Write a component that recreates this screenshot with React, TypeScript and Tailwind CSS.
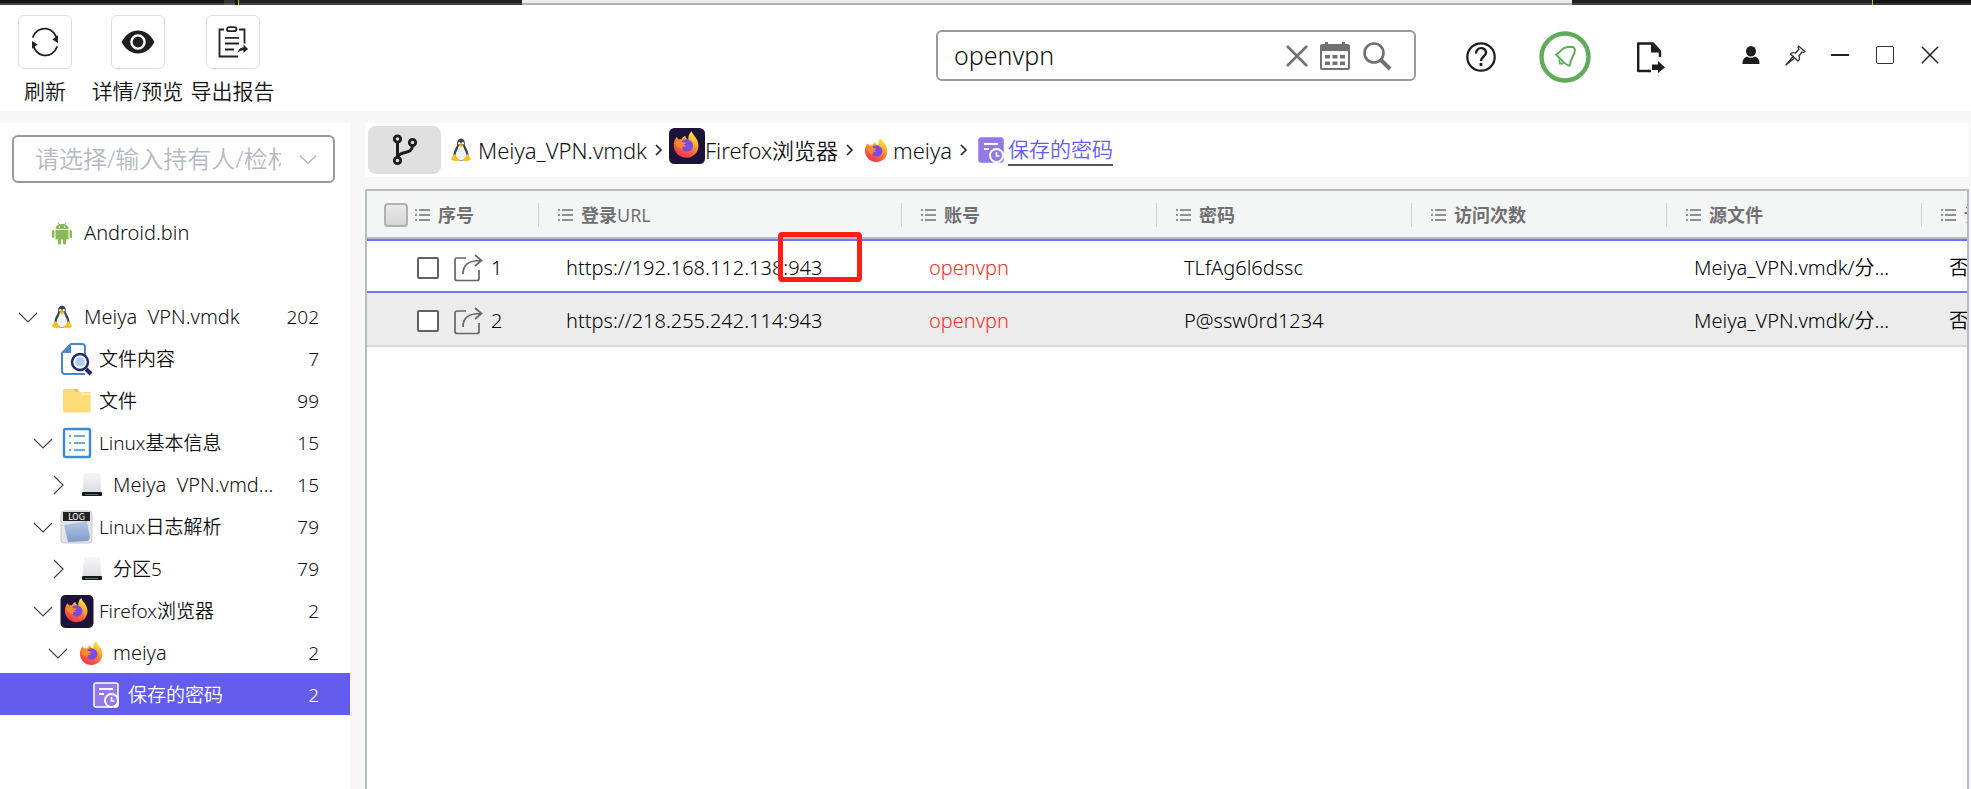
import type { ReactNode } from "react";

type IconProps = { className?: string };

const Refresh = () => (
  <svg width="28" height="30" viewBox="0 0 28 30" fill="none" stroke="#222" strokeWidth="1.8" strokeLinecap="round">
    <path d="M2 10A12.4 13 0 0 1 26 14" />
    <path d="M26 20A12.4 13 0 0 1 2 16" />
    <path d="M26.4 9.500v5.500l-4-2.500z" fill="#222" strokeWidth="1.200" />
    <path d="M1.600 20.500V15l4 2.500z" fill="#222" strokeWidth="1.200" />
  </svg>
);

const Eye = () => (
  <svg width="34" height="24" viewBox="0 0 34 24">
    <path d="M0.500 12C5 4 10.500 0.500 17 0.500S29 4 33.500 12C29 20 23.500 23.500 17 23.500S5 20 0.500 12z" fill="#1f1f1f" />
    <circle cx="17" cy="12" r="6.600" fill="#1f1f1f" stroke="#fff" strokeWidth="2.400" />
  </svg>
);

const Report = () => (
  <svg width="30" height="32" viewBox="0 0 30 32" fill="none" stroke="#222" strokeWidth="1.800">
    <path d="M6 3.500H1.500v27H20" />
    <path d="M21 3.500h5.500v14" />
    <rect x="9" y="1.200" width="9.500" height="4" rx="2" />
    <path d="M7 11.800h14M7 17.500h14M7 23.500h9" />
    <path d="M19.500 27c1-4 3-5.500 6-5.500V18.500l4.500 4.500-4.500 4v-2.800c-2.500 0-4.500 1-6 2.800z" fill="#222" stroke="none" />
  </svg>
);

const Chevron = ({ className }: IconProps) => (
  <svg className={className} width="20" height="20" viewBox="0 0 20 20" fill="none" stroke="currentColor" strokeWidth="1.200">
    <path d="M1 6l9 9 9-9" />
  </svg>
);

const Branch = () => (
  <svg width="26" height="32" viewBox="0 0 26 32" fill="none" stroke="#1c1c1c" strokeWidth="2.800">
    <circle cx="5.500" cy="5" r="3.200" />
    <circle cx="5.500" cy="26.500" r="3.200" />
    <circle cx="20.500" cy="8.500" r="3.200" />
    <path d="M5.500 8.500V23M20.500 12c-.5 8-10.500 5-14.500 10" strokeWidth="3" />
  </svg>
);

const Tux = () => (
  <svg className="shrink-0" width="20" height="24" viewBox="0 0 20 24">
    <path d="M10 .8c-3 0-4 2.200-3.800 5 .2 3-3.700 6.200-3.700 11.200 0 3 2.500 5.500 7.500 5.500s7.500-2.500 7.500-5.500c0-5-3.900-8.200-3.700-11.200C14 3 13 .8 10 .8z" fill="#37474f" />
    <path d="M10 7.500c-2 0-2.600 1-3 3C6.500 12.500 4.500 14 4.500 17.500c0 3 2.500 4.500 5.500 4.500s5.500-1.500 5.500-4.500c0-3.500-2-5-2.500-7-.4-2-1-3-3-3z" fill="#eff3f5" />
    <circle cx="8.300" cy="5.200" r="1.200" fill="#fff" />
    <circle cx="11.700" cy="5.200" r="1.200" fill="#fff" />
    <path d="M7.300 7.300L10 6l2.700 1.300L10 9.300z" fill="#ffb300" />
    <path d="M3.500 16l4 5.300c.5 1.700-1.500 2.400-3.500 1.700l-3-.8c-1.200-.6-.4-1.600-.4-2.700 0-1 .8-1 1.600-1.300zM16.500 16l-4 5.300c-.5 1.700 1.500 2.400 3.500 1.700l3-.8c1.200-.6.4-1.600.4-2.700 0-1-.8-1-1.600-1.300z" fill="#ffc020" />
  </svg>
);

const Android = () => (
  <svg className="shrink-0" width="20" height="23" viewBox="0 0 20 23" fill="#8bb957">
    <path d="M3.500 7C3.500 3.500 6 2 10 2s6.500 1.500 6.500 5z" />
    <path d="M6 .5l1.500 2.500M14 .5L12.500 3" stroke="#8bb957" />
    <path d="M3.500 8h13v9.500h-13z" />
    <rect x="0" y="8" width="2.500" height="8" rx="1.200" />
    <rect x="17.500" y="8" width="2.500" height="8" rx="1.200" />
    <rect x="6" y="16" width="3" height="6.500" rx="1.300" />
    <rect x="11" y="16" width="3" height="6.500" rx="1.300" />
    <circle cx="7.300" cy="5" r=".7" fill="#fff" />
    <circle cx="12.700" cy="5" r=".7" fill="#fff" />
  </svg>
);

const FoxShape = () => (
  <>
    <defs>
      <linearGradient id="fox" x1=".8" y1="0" x2=".3" y2="1">
        <stop offset="0" stopColor="#fff04a" />
        <stop offset=".35" stopColor="#ffb02e" />
        <stop offset=".65" stopColor="#ff6a35" />
        <stop offset="1" stopColor="#f02d5c" />
      </linearGradient>
    </defs>
    <path
      d="M3.500 5.500l2.200 2.300c.8-.3 1.700-.3 2.500 0C9 6 10.500 4.800 12 4.300c0 1.800.8 2.700 2.800 3.700C14.500 4.500 15.500 2 18 0c.5 3.500 5.800 6 6.300 12.800C24.700 20 19.500 25 13 25S1 20 1 13c0-2 .3-3.300 1-4.500z"
      fill="url(#fox)"
    />
    <path d="M10 8.200c3-1.500 8 .3 9 3.800 1 4-1.800 7.300-5.500 7.300-3.500 0-5.300-2.300-5-4.800 1.500.8 3.300.5 4.300-.7-1.500-.3-3-.8-3.800-2.300-.5-1-.3-2.500 1-3.300z" fill="#7a4be0" />
    <path d="M2.500 11c1.500-1.500 3.500-1.700 5.500-1 1.500.6 3 1 5 .8-.5 1.500-2 1.700-3 2.200-1 .6-1.200 2-.5 3.500-3 .2-6-1.500-7-5.500z" fill="#ff8a30" />
  </>
);

const Firefox = () => (
  <svg className="shrink-0" width="25" height="25" viewBox="0 0 26 26">
    <FoxShape />
  </svg>
);

const FirefoxTile = ({ className }: IconProps) => (
  <svg className={className} viewBox="0 0 34 34">
    <rect width="34" height="34" rx="5" fill="#1d1237" />
    <g transform="translate(3.500 3)">
      <FoxShape />
    </g>
  </svg>
);

const FileSearch = () => (
  <svg className="shrink-0" width="34" height="34" viewBox="0 0 34 34" fill="none">
    <path d="M25 13V5a3 3 0 0 0-3-3H11L2 11v18a3 3 0 0 0 3 3h20" stroke="#4a86c8" strokeWidth="2" />
    <path d="M11 2v9H2z" fill="#4a86c8" />
    <path d="M26 27l5 5" stroke="#27276b" strokeWidth="4" />
    <circle cx="20" cy="20" r="8" fill="#fff" stroke="#27276b" strokeWidth="2.500" />
    <circle cx="20" cy="20" r="4.800" fill="#a9d0f2" />
  </svg>
);

const Folder = () => (
  <svg className="shrink-0" width="30" height="26" viewBox="0 0 30 26">
    <path d="M1.500 1H14l3 3h11.500V23a1.500 1.500 0 0 1-1.500 1.500H2.500A1.500 1.500 0 0 1 1 23V2z" fill="#fddb78" />
    <path d="M11 1h4l2.500 3H14z" fill="#f3b26c" />
    <path d="M19 6h8" stroke="#fff6da" strokeWidth="1.500" />
  </svg>
);

const ListDoc = () => (
  <svg className="shrink-0" width="30" height="32" viewBox="0 0 30 32" fill="none" stroke="#3b8ad8">
    <rect x="2" y="2" width="26" height="28" rx="1.500" strokeWidth="2.400" />
    <path d="M7 9h2M7 16h2M7 23h2M12 9h11M12 16h11M12 23h11" strokeWidth="1.600" />
  </svg>
);

const Disk = () => (
  <svg className="mx-1 shrink-0" width="22" height="26" viewBox="0 0 22 26">
    <defs>
      <linearGradient id="disk" x1="0" y1="0" x2="0" y2="1">
        <stop offset="0" stopColor="#f7f7f8" />
        <stop offset="1" stopColor="#dcdde1" />
      </linearGradient>
    </defs>
    <path d="M3 1h16l1.500 19h-19z" fill="url(#disk)" />
    <rect x="1" y="20" width="20" height="4" rx="1" fill="#16191c" />
    <path d="M4 22.500h13" stroke="#4d7478" />
  </svg>
);

const LogFile = () => (
  <svg className="shrink-0" width="34" height="34" viewBox="0 0 34 34">
    <defs>
      <linearGradient id="log" x1="0" y1="0" x2="0" y2="1">
        <stop offset="0" stopColor="#b5c9e4" />
        <stop offset="1" stopColor="#7e9cc8" />
      </linearGradient>
    </defs>
    <rect x="1" y="1" width="31" height="32" rx="3" fill="#e3e5e8" stroke="#c9c9c9" />
    <path d="M4 15l23-4 3 17-2 3-20 1z" fill="url(#log)" />
    <path d="M3 2h27v9H3z" fill="#222" />
    <text x="16.500" y="9.600" textAnchor="middle" fontSize="8" fontWeight="400" fontFamily="DejaVu Sans, sans-serif" fill="#fff">LOG</text>
  </svg>
);

const SavedPage = ({ className }: IconProps) => (
  <svg className={className} width="26" height="26" viewBox="0 0 26 26" fill="none">
    <rect x="1" y="1" width="24" height="24" rx="2" fill="#937ae6" stroke="currentColor" strokeWidth="1.500" />
    <path d="M6 7h14M6 12h5" stroke="#fff" strokeWidth="2" />
    <circle cx="18.500" cy="18.500" r="6.500" fill="#937ae6" stroke="#fff" strokeWidth="2" />
    <path d="M18.500 15v4h3" stroke="#fff" strokeWidth="1.600" />
  </svg>
);

const ColumnMark = () => (
  <svg className="shrink-0" width="16" height="14" viewBox="0 0 16 14" stroke="#707070" strokeWidth="1.500">
    <path d="M0 2h2M0 7h2M0 12h2M4 2h11M4 7h11M4 12h11" />
  </svg>
);

const Share = () => (
  <svg width="29" height="28" viewBox="0 0 29 28" fill="none" stroke="#666" strokeWidth="1.700">
    <path d="M12 4H3a2 2 0 0 0-2 2v18.500a2 2 0 0 0 2 2h20a2 2 0 0 0 2-2V16" />
    <path d="M9 20C9 11 14 6.500 27 6.500M21 1l6.500 5.500L21 12" />
  </svg>
);

const Calendar = () => (
  <svg width="30" height="30" viewBox="0 0 30 30" fill="#707070">
    <path fillRule="evenodd" d="M2 3h3V1h3v2h14V1h3v2h3a2 2 0 0 1 2 2v22a2 2 0 0 1-2 2H2a2 2 0 0 1-2-2V5a2 2 0 0 1 2-2zm0 7v17h26V10z" />
    <path d="M5 14h5v3.500H5zM12.500 14h5v3.500h-5zM20 14h5v3.500h-5zM5 20.500h5V24H5zM12.500 20.500h5V24h-5zM20 20.500h5V24h-5z" />
  </svg>
);

const Magnifier = () => (
  <svg width="30" height="30" viewBox="0 0 30 30" fill="none" stroke="#707070">
    <circle cx="12" cy="12" r="9.500" strokeWidth="2.600" />
    <path d="M19 19l9 9" strokeWidth="4" />
  </svg>
);

const Cross = ({ className }: IconProps) => (
  <svg className={className} viewBox="0 0 22 22" fill="none" stroke="currentColor">
    <path d="M1 1l20 20M21 1L1 21" />
  </svg>
);

const Help = () => (
  <svg width="30" height="30" viewBox="0 0 30 30" fill="none" stroke="#1c1c1c">
    <circle cx="15" cy="15" r="13.700" strokeWidth="2.200" />
    <path d="M10 11.500c0-7 10-7 10-1 0 4-5 4-5 8.500" strokeWidth="2.400" />
    <path d="M15 21v3" strokeWidth="2.800" />
  </svg>
);

const Bell = () => (
  <svg width="52" height="52" viewBox="0 0 52 52" fill="none" stroke="#62ab5a">
    <circle cx="26" cy="26" r="23.500" strokeWidth="4.400" />
    <path d="M17 23.500C22 22 22 16 29.500 16H34.500l1.500 3c0 5-4.500 8-5.500 16L26 32.500 17 23.500z" strokeWidth="2" strokeLinejoin="round" />
    <path d="M20 28.500l1 4h3.500" strokeWidth="1.800" />
  </svg>
);

const FileExport = () => (
  <svg width="28" height="31" viewBox="0 0 28 31" fill="none">
    <path d="M14 29H1.200V1.500H16l7 7.500V15" stroke="#1c1c1c" strokeWidth="2.400" strokeLinejoin="round" />
    <path d="M14 1l9.500 9.500H14zM15 22.500h6V19l7 6.500-7 5.500v-3h-6z" fill="#1c1c1c" />
  </svg>
);

const Person = () => (
  <svg width="18" height="18" viewBox="0 0 18 18" fill="#1c1c1c">
    <ellipse cx="9" cy="5.200" rx="5" ry="5.200" />
    <path d="M.5 18c0-5 2-6.500 4.500-7.500 2.500 1.800 5.500 1.800 8 0 2.500 1 4.500 2.500 4.500 7.500z" />
  </svg>
);

const Pin = () => (
  <svg width="21" height="21" viewBox="0 0 21 21" fill="none" stroke="#333" strokeWidth="1.300" strokeLinejoin="round">
    <path d="M13.500 1L20 6.500l-1.500 1-1.500-.5-3 4c1 2.500.5 4-1 5L5.500 9c1-1.500 3-1.700 5-1L14 4l-1-1.500z" />
    <path d="M8 11.500L1 20l8.500-7" />
  </svg>
);

const tools: { label: string; icon: ReactNode }[] = [
  { label: "刷新", icon: <Refresh /> },
  { label: "详情/预览", icon: <Eye /> },
  { label: "导出报告", icon: <Report /> },
];

type Node = { label: string; count: string; icon: ReactNode; pad: string; arrow?: "down" | "right"; gap: string; latin?: boolean; active?: boolean };

const nodes: Node[] = [
  { label: "Meiya  VPN.vmdk", count: "202", icon: <Tux />, pad: "pl-[18px]", gap: "ml-[14px] mr-[12px]", arrow: "down", latin: true },
  { label: "文件内容", count: "7", icon: <FileSearch />, pad: "pl-[33px]", gap: "ml-[7px] mr-[5px]" },
  { label: "文件", count: "99", icon: <Folder />, pad: "pl-[33px]", gap: "ml-[9px] mr-[7px]" },
  { label: "Linux基本信息", count: "15", icon: <ListDoc />, pad: "pl-[33px]", gap: "ml-[9px] mr-[7px]", arrow: "down" },
  { label: "Meiya  VPN.vmdk_分区5", count: "15", icon: <Disk />, pad: "pl-[48px]", gap: "ml-[9px] mr-[6px]", arrow: "right", latin: true },
  { label: "Linux日志解析", count: "79", icon: <LogFile />, pad: "pl-[33px]", gap: "ml-[7px] mr-[5px]", arrow: "down" },
  { label: "分区5", count: "79", icon: <Disk />, pad: "pl-[48px]", gap: "ml-[9px] mr-[6px]", arrow: "right" },
  { label: "Firefox浏览器", count: "2", icon: <FirefoxTile className="h-[33px] w-[34px] shrink-0" />, pad: "pl-[33px]", gap: "ml-[7px] mr-[5px]", arrow: "down" },
  { label: "meiya", count: "2", icon: <Firefox />, pad: "pl-[48px]", gap: "ml-[11px] mr-[9px]", arrow: "down", latin: true },
  { label: "保存的密码", count: "2", icon: <SavedPage className="shrink-0 text-white" />, pad: "pl-[63px]", gap: "ml-[10px] mr-[9px]", active: true },
];

const columns = [
  { name: "序号" },
  { name: "登录", suffix: "URL" },
  { name: "账号" },
  { name: "密码" },
  { name: "访问次数" },
  { name: "源文件" },
  { name: "记录状态" },
];

const rows = [
  { id: "1", url: "https://192.168.112.138:943", user: "openvpn", password: "TLfAg6l6dssc", source: "Meiya_VPN.vmdk/分区5", flag: "否", marked: true },
  { id: "2", url: "https://218.255.242.114:943", user: "openvpn", password: "P@ssw0rd1234", source: "Meiya_VPN.vmdk/分区5", flag: "否", marked: false },
];

function TopStrip() {
  return (
    <div className="flex h-[5px] shrink-0">
      <div className="w-[224px] border-b-2 border-[#444] bg-[#161616]" />
      <div className="w-[11px] border-b-2 border-[#555] bg-[#333]" />
      <div className="w-[3px] bg-[#161616]" />
      <div className="w-px bg-[#e0b040]" />
      <div className="w-[283px] border-b-2 border-[#444] bg-[#222]" />
      <div className="flex-1 border-b-2 border-[#b2b2b2] bg-[#ededed]" />
      <div className="w-[300px] border-b-2 border-[#444] bg-[#222]" />
      <div className="w-px bg-[#e0b040]" />
      <div className="w-[98px] border-b-2 border-[#333] bg-[#131313]" />
    </div>
  );
}

function Header() {
  return (
    <header className="flex h-[106px] shrink-0 items-start justify-between bg-white">
      <div className="flex pt-[10px]">
        {tools.map((t) => (
          <button key={t.label} className="flex w-[95px] shrink-0 flex-col items-center gap-2 first:w-[90px]">
            <span className="flex h-[54px] w-[54px] items-center justify-center rounded-md border border-[#dedede]">{t.icon}</span>
            <span className="text-[21px] leading-7 whitespace-nowrap">{t.label}</span>
          </button>
        ))}
      </div>
      <div className="flex items-start pr-8">
        <div className="mt-[25px] mr-[50px] flex h-[51px] w-[480px] items-center rounded-md border-2 border-[#999] pr-[22px] pl-4">
          <input aria-label="搜索" defaultValue="openvpn" className="min-w-0 flex-1 bg-transparent text-[25px] outline-none" />
          <button aria-label="清除" className="mr-3"><Cross className="h-[22px] w-[22px] stroke-[2.5px] text-[#707070]" /></button>
          <button aria-label="日期" className="mr-3"><Calendar /></button>
          <button aria-label="查找"><Magnifier /></button>
        </div>
        <div className="flex h-[104px] items-center">
          <button aria-label="帮助" className="mr-[43px]"><Help /></button>
          <button aria-label="通知" className="mr-[46px]"><Bell /></button>
          <button aria-label="导出" className="mr-[77px]"><FileExport /></button>
          <button aria-label="用户" className="mr-[25px] pb-1"><Person /></button>
          <button aria-label="置顶" className="mr-[25px] pb-1"><Pin /></button>
          <button aria-label="最小化" className="mr-[27px] flex h-5 w-[18px] items-center pb-1"><span className="h-[2px] w-full bg-[#222]" /></button>
          <button aria-label="最大化" className="mr-[27px] pb-1"><span className="block h-[18px] w-[18px] rounded-xs border border-[#333]" /></button>
          <button aria-label="关闭" className="pb-1"><Cross className="h-[18px] w-[18px] stroke-[1.8px] text-[#222]" /></button>
        </div>
      </div>
    </header>
  );
}

function Sidebar() {
  return (
    <aside className="w-[350px] shrink-0 bg-white pt-3">
      <label className="mr-[15px] ml-3 flex h-[48px] items-center rounded-md border-2 border-[#999] pr-4 pl-[21px]">
        <input
          aria-label="持有人/检材"
          placeholder="请选择/输入持有人/检材"
          className="mr-[18px] w-0 flex-1 bg-transparent text-2xl outline-none placeholder:text-[#b4bac4]"
        />
        <Chevron className="h-[18px] w-[18px] text-[#a0a8b4]" />
      </label>
      <ul className="pt-7 text-[19px]">
        <li className="mb-[42px] flex h-[42px] items-center pt-[2px] pl-[52px]">
          <Android />
          <span className="ml-3 text-xl">Android.bin</span>
        </li>
        {nodes.map((n, i) => (
          <li key={i} className={`flex h-[42px] items-center pt-[2px] pr-[31px] ${n.pad} ${n.active ? "bg-[#645cec] text-white" : ""}`}>
            <span className="w-5 shrink-0">
              {n.arrow && (
                <button aria-label="展开" className="flex">
                  <Chevron className={n.arrow === "right" ? "-rotate-90 text-[#444]" : "text-[#444]"} />
                </button>
              )}
            </span>
            <span className={`flex shrink-0 ${n.gap}`}>{n.icon}</span>
            <span className={`min-w-0 flex-1 truncate whitespace-pre ${n.latin ? "text-xl" : ""} ${n.arrow === "right" ? "mr-4" : ""}`}>{n.label}</span>
            <span>{n.count}</span>
          </li>
        ))}
      </ul>
    </aside>
  );
}

const Separator = () => (
  <svg className="shrink-0" width="8" height="12" viewBox="0 0 8 12" fill="none" stroke="#222" strokeWidth="1.600">
    <path d="M1 1l5 5-5 5" />
  </svg>
);

function Breadcrumb() {
  return (
    <nav className="mr-[2px] flex h-[54px] shrink-0 items-center bg-white pl-[3px] text-[22px]">
      <button aria-label="分支" className="mr-[10px] flex h-12 w-[73px] items-center justify-center rounded-lg bg-[#e0e0e0]">
        <Branch />
      </button>
      <a href="#vmdk" className="mr-2 flex items-center gap-[7px]"><Tux />Meiya_VPN.vmdk</a>
      <Separator />
      <a href="#firefox" className="mr-2 ml-[6px] flex items-center">
        <FirefoxTile className="mb-2 h-9 w-9" />Firefox浏览器
      </a>
      <Separator />
      <a href="#meiya" className="mr-2 ml-[10px] flex items-center gap-1"><Firefox />meiya</a>
      <Separator />
      <a href="#saved" className="ml-[10px] flex items-center gap-1 text-[21px] text-[#645cec]">
        <SavedPage className="text-[#937ae6]" />
        <span className="border-b-2 border-[#555] leading-[30px]">保存的密码</span>
      </a>
    </nav>
  );
}

function ResultTable() {
  return (
    <div className="mt-3 mr-[2px] flex-1 overflow-hidden border-2 border-b-0 border-[#b8bcc2] bg-white">
      <table className="w-full table-fixed border-separate border-spacing-0 text-left">
        <colgroup>
          <col className="w-[171px]" />
          <col className="w-[363px]" />
          <col className="w-[255px]" />
          <col className="w-[255px]" />
          <col className="w-[255px]" />
          <col className="w-[255px]" />
          <col />
        </colgroup>
        <thead className="bg-[#f4f6f5] text-lg text-[#707070]">
          <tr>
            {columns.map((c, i) => (
              <th key={c.name} className="h-12 border-b-2 border-[#b8bcbc] p-0 pt-[2px] font-bold">
                <div className={`flex h-6 items-center gap-[7px] overflow-hidden whitespace-nowrap ${i === 0 ? "pl-[17px]" : "border-l border-[#d4d4d4] pl-[19px]"}`}>
                  {i === 0 && (
                    <input type="checkbox" aria-label="全选" className="h-6 w-6 shrink-0 appearance-none rounded-sm border-2 border-[#b0b0b0] bg-linear-to-b from-[#e8e8e8] to-[#d6d6d6]" />
                  )}
                  <ColumnMark />
                  <span>
                    {c.name}
                    {c.suffix && <span className="font-normal">{c.suffix}</span>}
                  </span>
                </div>
              </th>
            ))}
          </tr>
        </thead>
        <tbody className="text-xl text-black">
          {rows.map((r) => (
            <tr
              key={r.id}
              className={
                r.marked
                  ? "[&>td]:h-[54px] [&>td]:border-y-2 [&>td]:border-[#6b74f2]"
                  : "bg-[#ececec] [&>td]:h-[54px] [&>td]:border-b-2 [&>td]:border-[#d6d9dd]"
              }
            >
              <td className="p-0 pt-1">
                <div className="flex items-center pl-[50px]">
                  <input type="checkbox" aria-label={r.id} className="h-[22px] w-[22px] appearance-none rounded-xs border-2 border-[#606060] bg-white" />
                  <button aria-label="分享" className="mr-2 ml-[15px]"><Share /></button>
                  {r.id}
                </div>
              </td>
              <td className="p-0 pt-1 pl-7">
                <div className="relative">
                  {r.url}
                  {r.marked && <span className="absolute -top-[22px] left-[212px] h-[50px] w-[84px] rounded-sm border-[5px] border-[#ff2015]" />}
                </div>
              </td>
              <td className="p-0 pt-1 pl-7 text-[#f5301c]">{r.user}</td>
              <td className="p-0 pt-1 pl-7">{r.password}</td>
              <td className="p-0" />
              <td className="truncate p-0 pt-1 pr-4 pl-7">{r.source}</td>
              <td className="overflow-hidden p-0 pt-1 pl-7">{r.flag}</td>
            </tr>
          ))}
        </tbody>
      </table>
    </div>
  );
}

export default function App() {
  return (
    <div className="flex h-screen flex-col overflow-hidden bg-[#f7f7f7] font-['Noto_Sans','Noto_Sans_CJK_SC',sans-serif] font-[350] text-[#111]">
      <TopStrip />
      <Header />
      <div className="flex min-h-0 flex-1 pt-3">
        <Sidebar />
        <main className="ml-[15px] flex min-w-0 flex-1 flex-col">
          <Breadcrumb />
          <ResultTable />
        </main>
      </div>
    </div>
  );
}
